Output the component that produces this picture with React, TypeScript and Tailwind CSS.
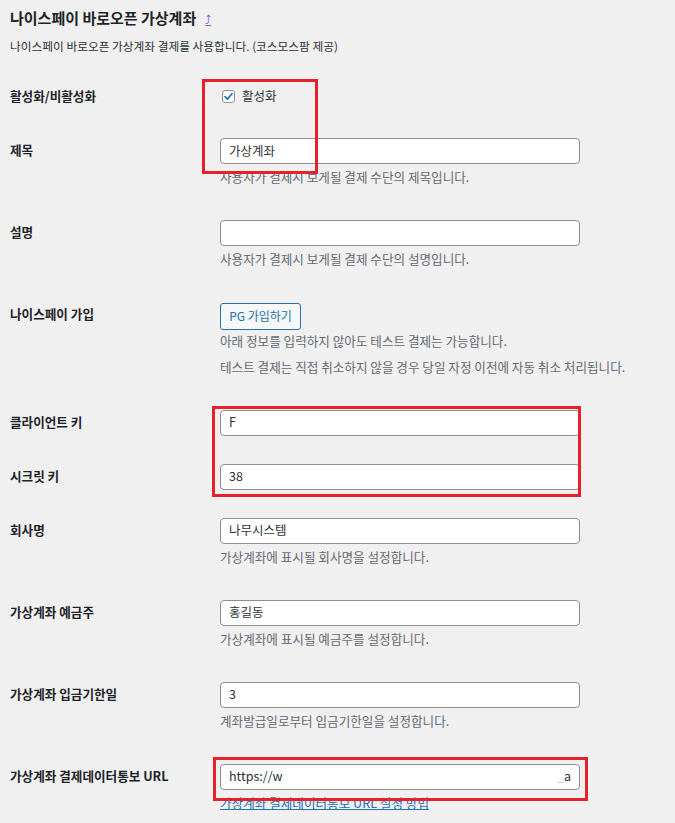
import type { ReactNode } from "react";

const font = "font-['Noto_Sans_CJK_KR','Noto_Sans',sans-serif]";

function Label({ children }: { children: ReactNode }) {
  return (
    <div className="w-[210px] shrink-0 text-[12.6px] font-bold leading-[24px] text-[#1d2327]">
      {children}
    </div>
  );
}

function TextBox({ value }: { value: string }) {
  return (
    <div className="flex h-[26px] w-[360px] items-center rounded-[4px] border border-[#8c8f94] bg-white px-[8px] text-[12.5px] text-[#2c3338]">
      {value}
    </div>
  );
}

function Desc({ children }: { children: ReactNode }) {
  return <p className="mt-[3px] mb-[5px] text-[12.6px] leading-[20px] text-[#646970]">{children}</p>;
}

function Row({ label, children }: { label: string; children: ReactNode }) {
  return (
    <div className="flex py-[14px]">
      <Label>{label}</Label>
      <div className="flex-1">{children}</div>
    </div>
  );
}

export default function App() {
  return (
    <div className={`relative min-h-screen w-[675px] bg-[#f0f0f1] px-[10px] pt-[8px] ${font}`}>
      <h2 className="flex h-[20px] items-center text-[15px] font-bold leading-[20px] text-[#1d2327]">
        나이스페이 바로오픈 가상계좌
        <span className="ml-[9px] pt-[3px] font-['DejaVu_Sans',sans-serif] text-[12px] font-normal leading-[16px] text-[#8e5cc4] underline">
          ⤴
        </span>
      </h2>
      <p className="mt-[9px] text-[11.7px] leading-[18px] text-[#2c3338]">
        나이스페이 바로오픈 가상계좌 결제를 사용합니다. (코스모스팜 제공)
      </p>

      <div className="mt-[17px]">
        <div className="flex py-[14px]">
          <div className="w-[210px] shrink-0 text-[12.6px] font-bold leading-[20px] text-[#1d2327]">
            활성화/비활성화
          </div>
          <div className="flex h-[24px] flex-1 items-start">
            <div className="flex h-[20px] items-center gap-[7px] pl-[2px]">
              <span className="flex h-[13px] w-[13px] items-center justify-center rounded-[3px] border border-[#8c8f94] bg-white">
                <svg viewBox="0 0 12 12" className="h-[11px] w-[11px]">
                  <path d="M2.2 6.2 L4.8 8.8 L9.8 3" fill="none" stroke="#2271b1" strokeWidth="1.9" strokeLinecap="round" strokeLinejoin="round" />
                </svg>
              </span>
              <span className="text-[12.5px] text-[#2c3338]">활성화</span>
            </div>
          </div>
        </div>

        <Row label="제목">
          <TextBox value="가상계좌" />
          <Desc>사용자가 결제시 보게될 결제 수단의 제목입니다.</Desc>
        </Row>

        <Row label="설명">
          <TextBox value="" />
          <Desc>사용자가 결제시 보게될 결제 수단의 설명입니다.</Desc>
        </Row>

        <Row label="나이스페이 가입">
          <button className="h-[27px] w-[81px] rounded-[3px] border border-[#2271b1] bg-[#f6f7f7] text-[12px] text-[#2271b1]">
            PG 가입하기
          </button>
          <p className="mt-[1px] text-[12.6px] leading-[20px] text-[#646970]">
            아래 정보를 입력하지 않아도 테스트 결제는 가능합니다.
          </p>
          <p className="mt-[6px] mb-[5px] text-[12.6px] leading-[20px] text-[#646970]">
            테스트 결제는 직접 취소하지 않을 경우 당일 자정 이전에 자동 취소 처리됩니다.
          </p>
        </Row>

        <Row label="클라이언트 키">
          <TextBox value="F" />
        </Row>

        <Row label="시크릿 키">
          <TextBox value="38" />
        </Row>

        <Row label="회사명">
          <TextBox value="나무시스템" />
          <Desc>가상계좌에 표시될 회사명을 설정합니다.</Desc>
        </Row>

        <Row label="가상계좌 예금주">
          <TextBox value="홍길동" />
          <Desc>가상계좌에 표시될 예금주를 설정합니다.</Desc>
        </Row>

        <Row label="가상계좌 입금기한일">
          <TextBox value="3" />
          <Desc>계좌발급일로부터 입금기한일을 설정합니다.</Desc>
        </Row>

        <Row label="가상계좌 결제데이터통보 URL">
          <div className="flex h-[26px] w-[360px] items-center justify-between rounded-[4px] border border-[#8c8f94] bg-white px-[8px] text-[12.5px] text-[#2c3338]">
            <span>https://w</span>
            <span>
              <span className="text-[#c3c4c7]">_</span>a
            </span>
          </div>
          <a className="mt-[3px] block text-[12.6px] leading-[20px] text-[#2271b1] underline">
            가상계좌 결제데이터통보 URL 설정 방법
          </a>
        </Row>
      </div>

      <div className="pointer-events-none absolute left-[202px] top-[79px] h-[95px] w-[116px] border-[3px] border-[#e8202c]" />
      <div className="pointer-events-none absolute left-[212px] top-[406px] h-[91px] w-[369px] border-[3px] border-[#e8202c]" />
      <div className="pointer-events-none absolute left-[213px] top-[757px] h-[44px] w-[375px] border-[3px] border-[#e8202c]" />
    </div>
  );
}
